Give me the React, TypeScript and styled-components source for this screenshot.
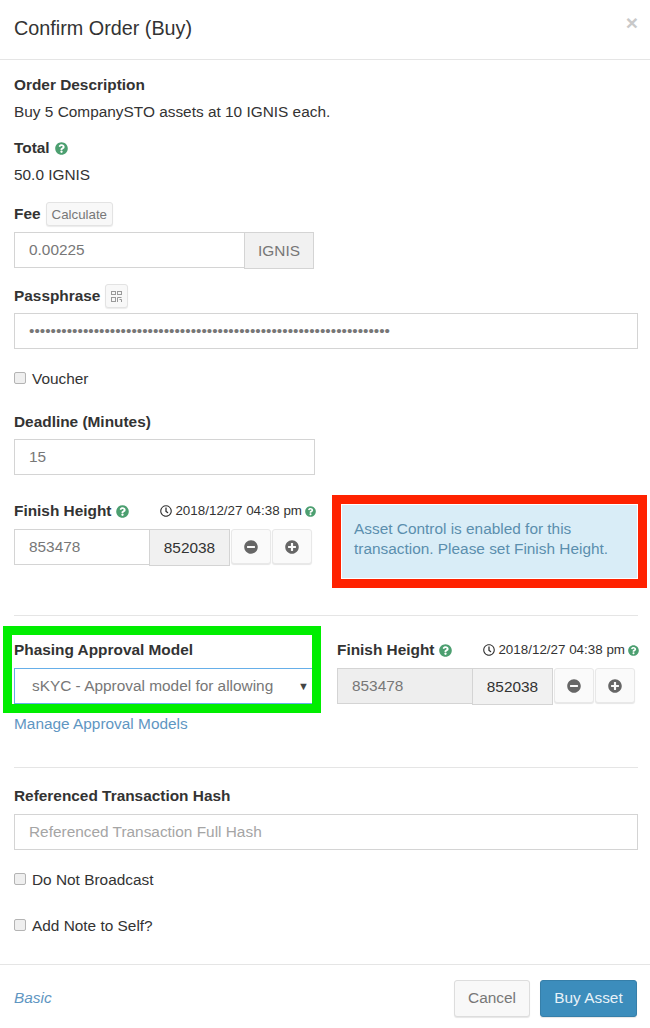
import React from 'react';
import styled, { createGlobalStyle } from 'styled-components';
import { FaMinusCircle, FaPlusCircle, FaQuestionCircle, FaRegClock } from 'react-icons/fa';

const GlobalStyle = createGlobalStyle`
  html, body {
    margin: 0;
    background: #fff;
    font-family: 'Liberation Sans', Arial, sans-serif;
    font-size: 15.4px;
    line-height: 20px;
    color: #333;
  }
  * {
    box-sizing: border-box;
  }
`;

const Modal = styled.div`
  width: 650px;
  height: 1028px;
  overflow: hidden;
  background: #fff;
`;

const Header = styled.header`
  display: flex;
  align-items: flex-start;
  justify-content: space-between;
  height: 60px;
  padding: 15px 12px 0 14px;
  border-bottom: 1px solid #e5e5e5;
`;

const Title = styled.h4`
  margin: 0;
  font-size: 19.8px;
  font-weight: 400;
  line-height: 26px;
`;

const Close = styled.span`
  color: #c9c9c9;
  font-size: 21px;
  font-weight: 700;
  line-height: 16px;
`;

const Body = styled.main`
  padding: 15px 12px 0 14px;
`;

const Group = styled.div<{ $top?: number; $bottom?: number }>`
  margin-top: ${(p) => p.$top ?? 0}px;
  margin-bottom: ${(p) => p.$bottom ?? 0}px;
`;

const Label = styled.div<{ $gap?: number }>`
  display: flex;
  align-items: center;
  gap: 5px;
  height: 20px;
  margin-bottom: ${(p) => p.$gap ?? 8}px;
  font-weight: 700;
  white-space: nowrap;
`;

const Text = styled.p`
  margin: 7px 0 0;
`;

const Help = styled(FaQuestionCircle)`
  flex: none;
  color: #4c9f70;
  font-size: 13px;
`;

const SmallHelp = styled(Help)`
  font-size: 11px;
`;

const TinyButton = styled.button`
  height: 24px;
  padding: 0 5px;
  border: 1px solid #e3e3e3;
  border-radius: 3px;
  background: #f8f8f8;
  box-shadow: 0 1px 1px rgba(0, 0, 0, 0.08);
  color: #777;
  font: 13.3px 'Liberation Sans', Arial, sans-serif;
`;

const QrButton = styled(TinyButton)`
  display: flex;
  align-items: center;
  justify-content: center;
  width: 23px;
  padding: 0;
  color: #999;
`;

const Input = styled.input<{ $width?: number; $shaded?: boolean }>`
  display: block;
  flex: none;
  width: ${(p) => (p.$width ? `${p.$width}px` : '100%')};
  height: 36px;
  padding: 0 14px;
  border: 1px solid #d4d4d4;
  border-radius: 0;
  outline: none;
  background: ${(p) => (p.$shaded ? '#eee' : '#fff')};
  color: #777;
  font: 15.4px 'Liberation Sans', Arial, sans-serif;

  &::placeholder {
    color: #a5a5a5;
    opacity: 1;
  }
`;

const InputRow = styled.div`
  display: flex;
  align-items: flex-start;
`;

const Addon = styled.span<{ $width: number; $muted?: boolean }>`
  display: flex;
  flex: none;
  align-items: center;
  justify-content: center;
  width: ${(p) => p.$width}px;
  height: 37px;
  margin-left: -1px;
  border: 1px solid #d4d4d4;
  background: #f1f1f1;
  color: ${(p) => (p.$muted ? '#777' : '#333')};
`;

const StepButton = styled.button`
  display: flex;
  flex: none;
  align-items: center;
  justify-content: center;
  width: 40px;
  height: 35px;
  margin-left: 1px;
  padding: 0;
  border: 1px solid #e8e8e8;
  border-radius: 3px;
  background: #fafafa;
  box-shadow: 0 1px 1px rgba(0, 0, 0, 0.1);
  color: #666;
  font-size: 14px;
`;

const Check = styled.label<{ $bottom: number }>`
  display: flex;
  align-items: center;
  gap: 6px;
  height: 20px;
  margin-bottom: ${(p) => p.$bottom}px;

  input {
    appearance: none;
    width: 12px;
    height: 12px;
    margin: -3px 0 0;
    border: 1px solid #b4b4b4;
    border-radius: 2px;
    background: #efefef;
  }
`;

const Columns = styled.div<{ $top?: number }>`
  display: grid;
  grid-template-columns: 301px 301px;
  column-gap: 22px;
  align-items: start;
  margin-top: ${(p) => p.$top ?? 0}px;
`;

const HeightLabel = styled(Label)`
  justify-content: space-between;
`;

const LabelName = styled.span`
  display: flex;
  align-items: center;
  gap: 5px;
`;

const Clock = styled.span`
  display: flex;
  align-items: center;
  gap: 3px;
  margin-right: -1px;
  font-size: 13.4px;
  font-weight: 400;
  color: #333;

  svg:first-child {
    font-size: 12px;
  }
`;

const Alert = styled.div`
  width: 297px;
  height: 75px;
  margin: 3px 0 0 4px;
  padding: 14px 12px;
  border: 1px solid #fff;
  outline: 9px solid #ff2200;
  background: #d9edf7;
  color: #5b8fae;
`;

const Divider = styled.hr<{ $top: number }>`
  height: 1px;
  margin: ${(p) => p.$top}px 0 0;
  border: 0;
  background: #e5e5e5;
`;

const HighlightBox = styled.div`
  width: 300px;
  height: 69px;
  margin: -5px 0 0 -2px;
  padding: 5px 0 0 2px;
  overflow: hidden;
  outline: 9px solid #00ee00;
`;

const Select = styled.div`
  position: relative;
  width: 310px;
  height: 36px;
  padding: 0 17px;
  overflow: hidden;
  border: 1px solid #66afe9;
  color: #777;
  line-height: 34px;
  white-space: nowrap;
`;

const SelectArrow = styled.span`
  position: absolute;
  top: 0;
  left: 283px;
  color: #444;
  font-size: 11px;
`;

const ModelLink = styled.a`
  display: block;
  margin-top: 10px;
  color: #5f96c2;
`;

const Footer = styled.footer`
  display: flex;
  align-items: center;
  justify-content: space-between;
  height: 64px;
  margin-top: 28px;
  padding: 3px 13px 0 14px;
  border-top: 1px solid #e5e5e5;
`;

const BasicLink = styled.a`
  color: #5f96c2;
  font-style: italic;
`;

const Actions = styled.div`
  display: flex;
  gap: 10px;
`;

const ActionButton = styled.button<{ $primary?: boolean }>`
  width: ${(p) => (p.$primary ? 97 : 76)}px;
  height: 37px;
  padding: 0;
  border: 1px solid ${(p) => (p.$primary ? '#367fa9' : '#ddd')};
  border-radius: 3px;
  background: ${(p) => (p.$primary ? '#3c8dbc' : '#f8f8f8')};
  box-shadow: 0 1px 1px rgba(0, 0, 0, 0.1);
  color: ${(p) => (p.$primary ? '#e8f2f8' : '#777')};
  font: 15.4px 'Liberation Sans', Arial, sans-serif;
`;

function QrIcon(): React.ReactElement {
  return (
    <svg width="13" height="13" viewBox="0 0 13 13" fill="none" stroke="currentColor" strokeWidth="1">
      <rect x="1.5" y="1.5" width="4" height="3" />
      <rect x="7.5" y="1.5" width="4" height="3" />
      <rect x="1.5" y="7.5" width="4" height="4" />
      <path d="M7.5 12V7.5h4M9.5 9.5h2V12" />
    </svg>
  );
}

function HeightInputs({ shaded }: { shaded?: boolean }): React.ReactElement {
  return (
    <InputRow>
      <Input $width={136} $shaded={shaded} value="853478" readOnly />
      <Addon $width={81}>852038</Addon>
      <StepButton>
        <FaMinusCircle />
      </StepButton>
      <StepButton>
        <FaPlusCircle />
      </StepButton>
    </InputRow>
  );
}

function FinishHeightLabel(): React.ReactElement {
  return (
    <HeightLabel>
      <LabelName>
        Finish Height <Help />
      </LabelName>
      <Clock>
        <FaRegClock /> 2018/12/27 04:38 pm <SmallHelp />
      </Clock>
    </HeightLabel>
  );
}

export default function App(): React.ReactElement {
  return (
    <Modal>
      <GlobalStyle />
      <Header>
        <Title>Confirm Order (Buy)</Title>
        <Close>×</Close>
      </Header>
      <Body>
        <Group $bottom={16}>
          <Label $gap={0}>Order Description</Label>
          <Text>Buy 5 CompanySTO assets at 10 IGNIS each.</Text>
        </Group>
        <Group $bottom={19}>
          <Label $gap={0}>
            Total <Help />
          </Label>
          <Text>50.0 IGNIS</Text>
        </Group>
        <Group $bottom={17}>
          <Label>
            Fee <TinyButton>Calculate</TinyButton>
          </Label>
          <InputRow>
            <Input $width={231} value="0.00225" readOnly />
            <Addon $width={70} $muted>
              IGNIS
            </Addon>
          </InputRow>
        </Group>
        <Group $bottom={20}>
          <Label $gap={7}>
            Passphrase{' '}
            <QrButton>
              <QrIcon />
            </QrButton>
          </Label>
          <Input type="password" value={'x'.repeat(67)} readOnly />
        </Group>
        <Check $bottom={23}>
          <input type="checkbox" /> Voucher
        </Check>
        <Group $bottom={26}>
          <Label $gap={7}>Deadline (Minutes)</Label>
          <Input $width={301} value="15" readOnly />
        </Group>
        <Columns>
          <div>
            <FinishHeightLabel />
            <HeightInputs />
          </div>
          <Alert>Asset Control is enabled for this transaction. Please set Finish Height.</Alert>
        </Columns>
        <Divider $top={36} />
        <Columns $top={24}>
          <div>
            <HighlightBox>
              <Label>Phasing Approval Model</Label>
              <Select>
                sKYC - Approval model for allowing
                <SelectArrow>▼</SelectArrow>
              </Select>
            </HighlightBox>
            <ModelLink>Manage Approval Models</ModelLink>
          </div>
          <div>
            <FinishHeightLabel />
            <HeightInputs shaded />
          </div>
        </Columns>
        <Divider $top={33} />
        <Group $top={18} $bottom={20}>
          <Label>Referenced Transaction Hash</Label>
          <Input placeholder="Referenced Transaction Full Hash" />
        </Group>
        <Check $bottom={26}>
          <input type="checkbox" /> Do Not Broadcast
        </Check>
        <Check $bottom={0}>
          <input type="checkbox" /> Add Note to Self?
        </Check>
      </Body>
      <Footer>
        <BasicLink>Basic</BasicLink>
        <Actions>
          <ActionButton>Cancel</ActionButton>
          <ActionButton $primary>Buy Asset</ActionButton>
        </Actions>
      </Footer>
    </Modal>
  );
}
